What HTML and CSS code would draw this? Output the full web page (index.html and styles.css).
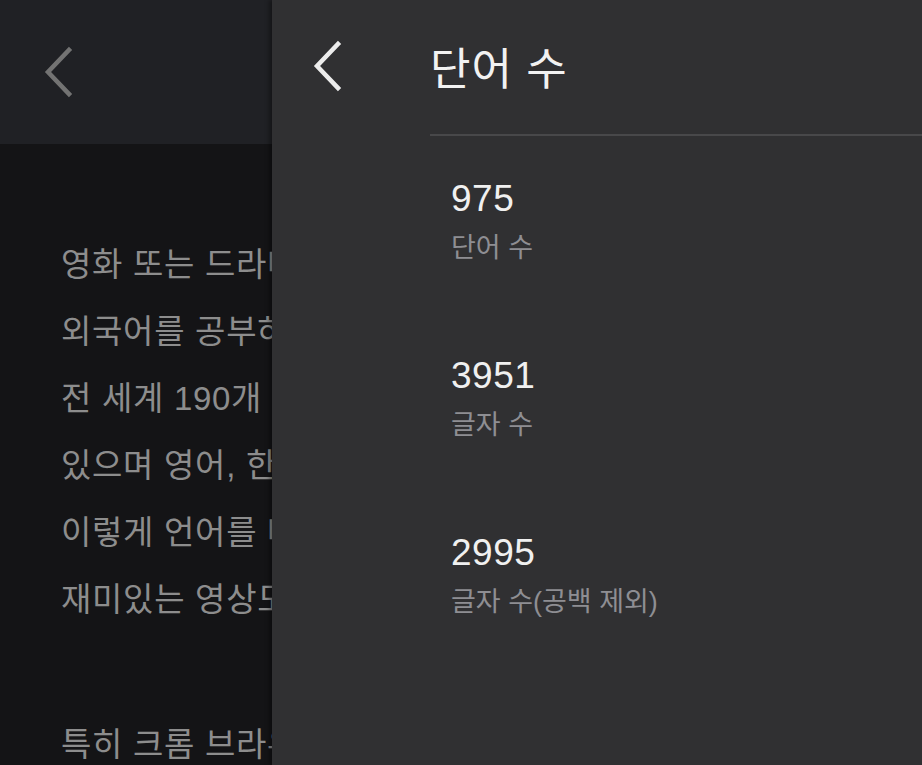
FILE: index.html
```html
<!DOCTYPE html>
<html lang="ko">
<head>
<meta charset="utf-8">
<link rel="stylesheet" href="styles.css">
</head>
<body>
<div class="screen">
  <div class="page">
    <header class="page-head">
      <svg class="back back-dim" width="32" height="52" viewBox="0 0 32 52"><path d="M27 4 L6 26 L27 48" fill="none" stroke="currentColor" stroke-width="4.5" stroke-linecap="square"/></svg>
    </header>
    <main class="page-body">
      <p class="para">영화 또는 드라마를 보면서<br>외국어를 공부하세요<br>전 세계 190개 국가에서<br>있으며 영어, 한국어<br>이렇게 언어를 배우면<br>재미있는 영상도 보고</p>
      <p class="para">특히 크롬 브라우저</p>
    </main>
  </div>
  <aside class="drawer">
    <div class="drawer-head">
      <svg class="back back-bright" width="34" height="52" viewBox="0 0 34 52"><path d="M28 4 L7 26 L28 48" fill="none" stroke="currentColor" stroke-width="4.5" stroke-linecap="square"/></svg>
      <h1 class="drawer-title">단어 수</h1>
    </div>
    <ul class="stats">
      <li class="stat"><span class="stat-num">975</span><span class="stat-label">단어 수</span></li>
      <li class="stat"><span class="stat-num">3951</span><span class="stat-label">글자 수</span></li>
      <li class="stat"><span class="stat-num">2995</span><span class="stat-label">글자 수(공백 제외)</span></li>
    </ul>
  </aside>
</div>
</body>
</html>
```
FILE: styles.css
```css
* { box-sizing: border-box; }
html, body { margin: 0; padding: 0; }
body {
  width: 922px;
  height: 765px;
  overflow: hidden;
  background: #141416;
  font-family: "Liberation Sans", "Noto Sans CJK KR", sans-serif;
}
.screen {
  position: relative;
  width: 922px;
  height: 765px;
  overflow: hidden;
}
.page {
  display: flex;
  flex-direction: column;
  height: 100%;
}
.page-head {
  flex: none;
  height: 144px;
  background: #202125;
  display: flex;
  align-items: center;
  padding-left: 42px;
  padding-top: 0;
}
.back { display: block; }
.back-dim { color: #737373; }
.back-bright { color: #ececec; }
.page-body {
  flex: 1;
  background: #141416;
  padding: 87px 0 0 61px;
}
.para {
  margin: 0 0 78px;
  font-family: "Liberation Sans", "Noto Sans CJK KR", sans-serif;
  font-size: 33px;
  line-height: 67px;
  letter-spacing: 0.7px;
  color: #8d8d8d;
  white-space: nowrap;
}
.drawer {
  position: absolute;
  top: 0;
  right: 0;
  width: 650px;
  height: 765px;
  background: #303032;
  box-shadow: -3px 0 4px rgba(0,0,0,0.35);
}
.drawer-head {
  height: 136px;
  display: flex;
  align-items: center;
  padding-left: 38px;
  padding-bottom: 4px;
  position: relative;
}
.drawer-head::after {
  content: "";
  position: absolute;
  left: 158px;
  right: 0;
  bottom: 0;
  height: 2px;
  background: #48484a;
}
.drawer-title {
  margin: 0 0 0 86px;
  font-family: "Noto Sans CJK KR", sans-serif;
  font-weight: 400;
  font-size: 44px;
  color: #f2f2f2;
  letter-spacing: 1px;
}
.stats {
  list-style: none;
  margin: 0;
  padding: 38px 0 0 179px;
}
.stat {
  display: flex;
  flex-direction: column;
  height: 177px;
}
.stat-num {
  font-family: "Liberation Sans", sans-serif;
  font-size: 37px;
  line-height: 50px;
  letter-spacing: 0.5px;
  color: #f0f0f0;
}
.stat-label {
  font-family: "Liberation Sans", "Noto Sans CJK KR", sans-serif;
  font-size: 27px;
  line-height: 40px;
  color: #8e8e93;
  margin-top: 4px;
}
```
